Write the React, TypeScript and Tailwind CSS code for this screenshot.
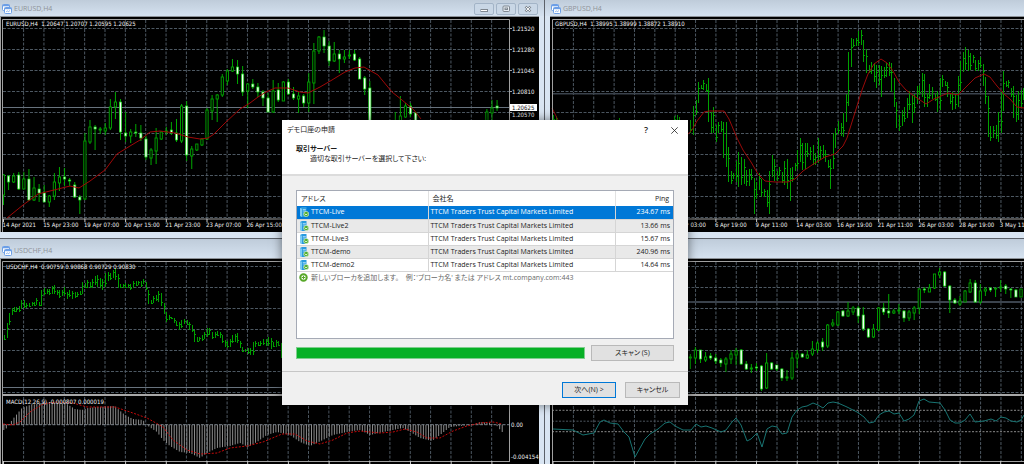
import type { ReactNode } from 'react'

// [high, body top, body bottom, low, filled]
type Candle = [number, number, number, number, number]
type Point = [number, number]

const eurusdMain: Candle[] = [
  [174, 175, 195, 205, 0], [175, 176, 182, 190, 1], [173, 176, 182, 183, 0], [172, 175, 189, 190, 1],
  [172, 179, 189, 189, 0], [169, 179, 200, 201, 1], [177, 188, 200, 201, 0], [184, 189, 193, 202, 1],
  [185, 193, 202, 202, 1], [195, 196, 202, 207, 0], [173, 182, 196, 200, 0], [167, 177, 183, 191, 0],
  [168, 177, 179, 186, 1], [178, 180, 181, 186, 1], [182, 185, 197, 198, 1], [195, 197, 200, 214, 1],
  [133, 141, 199, 200, 0], [120, 127, 142, 144, 0], [125, 127, 129, 150, 1], [127, 129, 130, 134, 0],
  [123, 128, 131, 135, 0], [99, 107, 128, 130, 0], [92, 102, 107, 119, 0], [99, 102, 132, 140, 1],
  [112, 133, 136, 142, 1], [129, 132, 136, 143, 0], [124, 132, 133, 137, 1], [125, 133, 138, 141, 1],
  [136, 139, 157, 160, 1], [148, 150, 158, 165, 0], [128, 138, 151, 164, 0], [131, 132, 139, 140, 0],
  [127, 131, 132, 135, 0], [122, 130, 133, 135, 1], [119, 133, 140, 142, 1], [104, 106, 141, 143, 0],
  [101, 106, 155, 161, 1], [146, 149, 156, 169, 0], [144, 144, 150, 151, 0], [138, 139, 145, 146, 0],
  [108, 110, 139, 140, 0], [95, 99, 111, 120, 0], [94, 95, 99, 122, 0], [74, 77, 95, 97, 0],
  [69, 71, 81, 85, 0], [59, 67, 71, 72, 0], [60, 67, 74, 84, 1], [66, 74, 92, 96, 1],
  [83, 84, 91, 108, 0], [79, 84, 87, 89, 1], [83, 87, 92, 97, 1], [90, 92, 98, 106, 1],
  [93, 98, 112, 112, 1], [80, 91, 112, 113, 0], [83, 90, 100, 102, 1], [81, 82, 101, 101, 0],
  [79, 82, 94, 95, 1], [87, 94, 98, 100, 1], [92, 96, 99, 113, 0], [94, 96, 103, 107, 1],
  [73, 82, 103, 112, 0], [43, 51, 83, 104, 0], [36, 37, 51, 54, 0], [30, 37, 46, 53, 1],
  [41, 46, 61, 66, 1], [42, 54, 61, 62, 0], [50, 54, 59, 73, 1], [50, 57, 59, 63, 0],
  [50, 55, 56, 59, 0], [50, 54, 60, 61, 1], [57, 59, 79, 79, 1], [76, 78, 89, 95, 1],
  [81, 88, 125, 128, 1],
]

const eurusdMid: Candle[] = [
  [112, 124, 130, 132, 0], [96, 116, 125, 128, 0], [103, 106, 117, 118, 0], [103, 106, 114, 117, 1], [112, 113, 125, 128, 1],
]

const eurusdLast: Candle[] = [
  [109, 112, 125, 128, 0], [100, 108, 113, 122, 0], [100, 106, 108, 111, 1],
]

const lowerRight: Candle[] = [
  [354, 357, 358, 369, 0], [347, 350, 358, 364, 0], [350, 350, 359, 363, 1], [352, 357, 360, 362, 0],
  [353, 356, 358, 360, 1], [354, 358, 361, 364, 1], [358, 360, 363, 367, 1], [357, 359, 364, 372, 0],
  [350, 354, 359, 364, 0], [348, 351, 355, 365, 0], [349, 350, 364, 365, 1], [361, 364, 369, 370, 1],
  [364, 368, 369, 373, 0], [363, 367, 368, 371, 1], [365, 366, 389, 391, 1], [353, 363, 388, 389, 0],
  [362, 363, 369, 370, 1], [365, 365, 369, 371, 1], [368, 369, 378, 381, 1], [370, 377, 378, 381, 0],
  [352, 358, 378, 380, 0], [350, 354, 358, 368, 0], [353, 354, 357, 358, 1], [350, 355, 358, 359, 0],
  [341, 349, 354, 356, 0], [341, 343, 350, 353, 0], [338, 342, 347, 351, 1], [324, 325, 346, 348, 0],
  [319, 323, 325, 327, 0], [311, 312, 325, 326, 0], [310, 311, 316, 317, 1], [302, 311, 316, 317, 0],
  [306, 308, 312, 315, 0], [306, 308, 316, 323, 1], [307, 315, 329, 331, 1], [328, 329, 337, 338, 1],
  [324, 329, 337, 338, 0], [307, 308, 330, 331, 0], [303, 308, 312, 315, 1], [294, 311, 313, 318, 1],
  [309, 311, 313, 314, 0], [304, 310, 311, 314, 0], [310, 311, 318, 322, 1], [310, 312, 318, 321, 0],
  [306, 308, 313, 320, 0], [288, 289, 308, 314, 0], [287, 289, 290, 293, 1], [284, 288, 292, 292, 0],
  [274, 274, 288, 289, 0], [268, 272, 275, 278, 0], [271, 272, 286, 287, 1], [285, 286, 300, 313, 1],
  [298, 300, 303, 304, 1], [296, 301, 304, 306, 0], [290, 291, 302, 302, 0], [279, 283, 292, 293, 0],
  [280, 283, 302, 303, 1], [284, 291, 302, 304, 0], [287, 289, 291, 296, 0], [287, 288, 290, 292, 1],
  [288, 288, 289, 297, 0], [280, 287, 288, 292, 0], [284, 286, 289, 294, 1], [288, 289, 290, 298, 1],
  [289, 290, 297, 297, 1], [289, 289, 297, 297, 0],
]

// x high low
const gbpusdBars = `553 115 121, 556 116 124, 619 118 126, 674 116 126, 677 115 126, 679 117 126,
690 120 133, 693 106 135, 696 100 115, 698 82 103, 701 85 89, 703 80 90, 706 84 92, 708 78 122, 711 112 133, 713 107 133,
716 125 142, 718 122 133, 721 121 132, 723 122 158, 726 122 167, 728 147 182, 731 171 184, 733 173 179, 736 161 182,
738 152 187, 741 157 185, 744 159 184, 746 170 186, 749 169 186, 751 169 180, 754 178 214, 756 182 199, 759 173 190,
761 179 197, 764 189 197, 767 190 207, 769 171 214, 772 155 177, 774 159 181, 777 171 181, 779 167 176, 782 172 183,
784 161 185, 787 159 189, 790 168 201, 792 167 182, 795 163 171, 797 150 169, 800 138 162, 802 143 170, 805 143 169,
807 143 157, 810 147 160, 813 145 165, 815 153 165, 818 138 163, 820 146 160, 823 145 158, 825 150 162, 828 160 168,
830 159 189, 833 133 169, 835 128 148, 838 121 134, 841 123 136, 843 113 137, 846 94 122, 848 52 106, 851 38 67,
853 39 47, 856 38 46, 858 31 46, 861 30 45, 863 40 62, 866 49 73, 869 65 73, 871 62 74, 874 63 82, 876 65 88,
879 65 85, 881 66 97, 884 67 78, 886 63 77, 889 62 76, 891 63 92, 894 78 107, 896 102 128, 899 115 131, 902 110 126,
904 107 122, 907 98 118, 909 91 110, 912 95 123, 914 94 113, 917 86 104, 919 85 95, 922 73 97, 924 74 107, 927 93 107,
929 84 99, 932 87 99, 935 93 101, 937 91 112, 940 78 110, 942 75 87, 945 81 86, 947 82 97, 950 93 104, 952 92 110,
955 93 109, 958 76 107, 960 61 91, 963 52 72, 965 47 70, 968 50 71, 970 53 70, 973 55 63, 975 60 71, 978 60 71,
980 57 68, 983 64 86, 985 77 104, 988 96 137, 990 126 141, 993 126 138, 996 125 139, 998 112 142, 1001 92 133,
1003 71 111, 1006 81 87, 1008 80 88, 1011 88 97, 1013 86 118, 1016 95 122, 1018 91 120, 1021 90 108, 1023 88 100`

const usdchfBars = `4 335 340, 7 323 338, 9 313 325, 12 308 315, 14 307 312, 16 307 312, 19 306 312, 21 300 309, 24 300 308,
26 303 308, 29 303 307, 32 302 306, 34 302 306, 36 298 305, 39 302 306, 41 290 306, 44 288 295, 47 289 294, 49 289 295,
52 286 294, 54 285 294, 57 290 295, 59 290 298, 62 290 296, 64 287 295, 67 292 299, 69 290 297, 72 291 299, 75 292 298,
77 292 297, 80 291 295, 82 282 294, 85 283 288, 87 280 288, 90 282 288, 92 279 288, 95 276 285, 97 275 287, 100 278 288,
102 279 290, 105 273 287, 108 272 281, 110 273 280, 113 270 278, 115 268 280, 118 274 288, 120 284 288, 123 284 288,
125 283 288, 128 284 288, 130 284 290, 133 281 288, 136 281 286, 138 281 285, 141 281 287, 143 279 284, 146 282 290,
148 290 304, 151 300 304, 153 296 303, 156 295 301, 158 291 302, 161 293 306, 164 303 314, 166 312 322, 169 315 320,
171 317 319, 174 318 323, 176 321 326, 179 322 330, 181 320 328, 184 319 324, 187 320 325, 189 322 330, 192 325 332,
194 330 342, 197 337 342, 199 337 341, 202 335 341, 204 332 339, 207 328 337, 209 328 335, 212 332 339, 215 332 338,
217 331 336, 220 332 338, 222 335 343, 225 340 347, 227 341 348, 230 339 347, 232 335 343, 235 334 342, 237 333 343,
240 341 348, 242 347 352, 245 349 352, 248 348 354, 250 348 355, 253 342 355, 255 341 347, 258 342 346, 260 341 346,
263 339 345, 266 339 346, 268 337 346, 271 338 349, 273 342 347, 276 340 347, 278 341 346, 281 343 358`

const eurusdAverage =
  '7,218 23,205 38,194 50,191 62,188 70,186 79,188 90,181 105,170 117,154 130,146 140,140 150,132 160,131 175,133 188,137 200,139 208,138 214,134 225,123 240,109 250,103 258,97 266,92 275,88 288,88 300,92 308,93 320,87 332,80 345,72 355,68 364,67 378,75 392,92 402,100 414,110 421,119'

const gbpusdAverage =
  '552,108 558,120 570,138 660,170 688,134 692,130 697,121 704,112 709,111 724,111 729,119 737,138 743,150 751,162 758,174 765,181 775,182 788,182 795,179 803,171 815,163 825,157 835,154 843,146 847,138 852,122 857,106 862,90 868,74 874,64 881,59 887,63 893,71 899,82 906,90 914,96 920,100 926,104 934,99 948,93 958,95 965,88 975,78 984,74 990,77 997,86 1004,94 1010,99 1017,107 1024,108'

const macdProfile: Point[] = [
  [4, 430], [7, 428], [9, 425], [12, 420], [17, 414], [22, 408], [30, 405], [50, 402], [67, 404], [75, 409],
  [82, 410], [88, 408], [97, 407], [115, 406], [118, 409], [125, 415], [133, 419], [143, 420], [148, 426],
  [157, 432], [163, 440], [170, 446], [180, 452], [190, 453], [200, 458], [207, 453], [217, 448], [230, 446],
  [240, 443], [248, 447], [257, 442], [267, 435], [277, 432], [290, 435], [300, 442], [310, 446], [323, 440],
  [333, 435], [347, 432], [360, 430], [370, 435], [383, 432], [403, 428], [412, 433], [420, 438], [432, 441],
  [440, 435], [450, 427], [460, 426], [472, 425], [480, 422], [490, 423], [497, 426], [502, 432],
]

const macdSignal =
  '3,424 13,425 20,422 30,412 43,404 57,402 73,403 87,407 115,407 130,412 147,418 163,427 173,440 187,450 200,454 217,453 230,448 247,446 263,442 282,434 295,434 307,441 320,444 333,440 347,433 360,431 380,433 393,432 405,429 417,432 427,438 440,438 453,431 467,426 480,423 493,422 502,424'

const oscillator =
  '553,429 573,430 583,435 594,433 600,422 604,420 610,423 618,424 624,432 629,437 635,457 645,439 650,434 658,429 665,423 670,422 675,426 683,430 691,430 696,424 701,427 706,426 712,428 721,432 726,430 732,422 736,418 741,425 747,441 751,439 757,433 762,447 767,429 772,426 777,427 782,434 787,433 792,417 797,410 802,407 807,406 813,403 818,405 823,408 828,403 833,402 838,403 847,407 857,412 864,417 869,423 874,422 879,415 884,412 889,411 894,414 899,413 904,421 909,419 914,415 919,401 924,399 929,402 940,403 945,410 950,420 955,423 960,423 965,420 970,414 975,422 984,421 991,419 996,421 1001,417 1006,418 1011,421 1017,422 1021,420 1024,415'

const servers = [
  { address: 'TTCM-Live', ping: '234.67 ms' },
  { address: 'TTCM-Live2', ping: '13.66 ms' },
  { address: 'TTCM-Live3', ping: '15.67 ms' },
  { address: 'TTCM-demo', ping: '240.96 ms' },
  { address: 'TTCM-demo2', ping: '14.64 ms' },
]

function macdAt(x: number) {
  const i = macdProfile.findIndex((p) => p[0] >= x)
  if (i <= 0) return macdProfile[i === 0 ? 0 : macdProfile.length - 1][1]
  const [x0, y0] = macdProfile[i - 1]
  const [x1, y1] = macdProfile[i]
  return y0 + ((y1 - y0) * (x - x0)) / (x1 - x0)
}

const steps = (start: number, step: number, count: number) =>
  Array.from({ length: count }, (_, i) => start + i * step)

function Candles({ data, start }: { data: Candle[]; start: number }) {
  return (
    <g>
      {data.map(([high, top, bottom, low, filled], i) => {
        const x = start + i * 5.088
        return (
          <g key={i}>
            <path d={`M${x} ${high}V${low}`} stroke="#00a800" />
            <rect
              x={x - 1.1}
              y={top}
              width={2.2}
              height={Math.max(bottom - top, 1)}
              fill={filled ? '#f4fff4' : '#000'}
              stroke={filled ? '#14d814' : '#00a800'}
              strokeWidth={filled ? 0.7 : 0.9}
            />
          </g>
        )
      })}
    </g>
  )
}

function Bars({ data }: { data: string }) {
  const bars = data.split(',').map((bar) => bar.trim().split(' ').map(Number))
  const lines = bars.map(([x, high, low]) => `M${x + 0.5} ${high}V${low}`).join('')
  const ticks = bars
    .map(([x, high, low], i) => `M${x + 1} ${Math.round(high + (low - high) * (i % 2 ? 0.3 : 0.7)) + 0.5}h1`)
    .join('')
  return (
    <g fill="none" stroke="#00a000">
      <path d={lines} />
      <path d={ticks} />
    </g>
  )
}

function Grid({ x, y, x0, x1, y0, y1 }: { x: number[]; y: number[]; x0: number; x1: number; y0: number; y1: number }) {
  return (
    <g stroke="#56626d" strokeWidth="0.9" strokeDasharray="3 1.5">
      {x.map((v) => (
        <path key={`x${v}`} d={`M${v} ${y0}V${y1}`} />
      ))}
      {y.map((v) => (
        <path key={`y${v}`} d={`M${x0} ${v}H${x1}`} />
      ))}
    </g>
  )
}

function TimeAxis({ start, labels }: { start: number; labels: string[] }) {
  return (
    <g>
      {labels.map((label, i) => {
        const x = start + i * 40.7
        return (
          <g key={label}>
            <path d={`M${x} 219V222`} stroke="#c8c8c8" />
            <text x={x - 1} y="227" fill="#f0f0f0" fontSize="6">
              {label}
            </text>
          </g>
        )
      })}
    </g>
  )
}

function Chart({ x, y, label, children }: { x: number; y: number; label: string; children: ReactNode }) {
  return (
    <svg
      role="img"
      aria-label={label}
      className="block h-full w-full font-['DejaVu_Sans_Condensed','DejaVu_Sans',sans-serif]"
    >
      <g transform={`translate(${-x} ${-y})`}>{children}</g>
    </svg>
  )
}

function ChartIcon() {
  return (
    <svg className="h-2.5 w-2.5 shrink-0" viewBox="0 0 10 10" aria-hidden="true">
      <rect x="0.5" y="0.5" width="7" height="6" rx="1" fill="#fff" stroke="#6c9fe6" />
      <path d="M0.5 1.5h7" stroke="#6c9fe6" strokeWidth="1.6" />
      <rect x="2.5" y="3.5" width="7" height="6" rx="1" fill="#fff" stroke="#6c9fe6" />
      <path d="M2.5 4.5h7" stroke="#6c9fe6" strokeWidth="1.4" />
      <path d="M4 8.2l1.2-1.4 1 .9L8 6.6" stroke="#6c9fe6" strokeWidth="0.7" fill="none" />
    </svg>
  )
}

function WindowButton({ label, children }: { label: string; children: ReactNode }) {
  return (
    <button
      type="button"
      aria-label={label}
      className="flex h-3 w-5 items-center justify-center rounded-xs border border-[#a3b4c7] bg-[#c9d7e6]"
    >
      <svg className="h-2 w-2.5" viewBox="0 0 10 8" fill="none" stroke="#7f8790" aria-hidden="true">
        {children}
      </svg>
    </button>
  )
}

function WindowButtons() {
  return (
    <div className="ml-auto flex gap-0.5 pr-1.5">
      <WindowButton label="Minimize">
        <rect x="2" y="4.5" width="6.5" height="2" fill="#fff" />
      </WindowButton>
      <WindowButton label="Restore">
        <rect x="2" y="1" width="6.5" height="5.5" rx="1" fill="#e8eef5" />
        <rect x="4" y="3" width="2.5" height="1.5" />
      </WindowButton>
      <WindowButton label="Close">
        <path d="M2.5 1.5l5 5M7.5 1.5l-5 5" strokeWidth="2.4" />
        <path d="M2.8 1.8l4.4 4.4M7.2 1.8l-4.4 4.4" stroke="#fff" strokeWidth="0.9" />
      </WindowButton>
    </div>
  )
}

type ChartWindowProps = {
  title?: string
  side: 'left' | 'right'
  row: 'top' | 'bottom'
  children: ReactNode
}

function ChartWindow({ title, side, row, children }: ChartWindowProps) {
  const left = side === 'left'
  const top = row === 'top'
  return (
    <section
      className={`flex min-w-0 flex-col overflow-hidden bg-[#d9e5f2] ${left ? '' : 'border-l border-[#5b6068]'} ${
        top ? 'border-b border-b-[#5b6068] pb-1.5' : ''
      }`}
    >
      <header
        className={`flex shrink-0 items-center gap-0.5 bg-linear-to-b from-[#bfccda] to-[#d5e2f0] ${
          top ? 'h-4 pt-0.5' : 'h-[19px] pt-1'
        } ${left ? 'pl-0.5' : 'pl-1.5'}`}
      >
        <ChartIcon />
        <h2 className="text-[7px] leading-3 text-[#8f9398]">{title}</h2>
        {left && top && <WindowButtons />}
      </header>
      <div className={`min-h-0 flex-1 border-t border-[#8d9298] bg-black ${left ? 'mr-[5px]' : 'ml-[5px]'}`}>
        {children}
      </div>
    </section>
  )
}

function ServerIcon() {
  return (
    <svg className="h-2.5 w-2.5 shrink-0" viewBox="0 0 10 10" aria-hidden="true">
      <path d="M1 1l2-1h4.5v8.5L6 10H3L1 9z" fill="#2a9be0" />
      <path d="M1 1l2 .8V10L1 9z" fill="#7cccf5" />
      <path d="M3.8 2.5h3M3.8 4h3" stroke="#bfe6fb" strokeWidth="0.7" />
      <circle cx="7.2" cy="7" r="2.6" fill="#4fae2c" stroke="#eaf6e4" strokeWidth="0.6" />
      <path d="M5.8 6.6l1.4 1.4 1.4-1.4" stroke="#fff" strokeWidth="0.9" fill="none" />
    </svg>
  )
}

function AddIcon() {
  return (
    <svg className="h-[9px] w-[9px] shrink-0" viewBox="0 0 10 10" aria-hidden="true">
      <circle cx="5" cy="5" r="3.6" fill="#fff" stroke="#58a829" strokeWidth="2.2" />
      <path d="M5 3v4M3 5h4" stroke="#58a829" strokeWidth="1.2" />
    </svg>
  )
}

function DemoAccountDialog() {
  return (
    <div
      role="dialog"
      aria-labelledby="dialog-title"
      className="absolute top-[120px] left-[282px] w-[406px] bg-[#f0f0f0] text-[7px] leading-3 text-[#1c1c1c] shadow-[0_0_10px_rgba(0,0,0,0.5)]"
    >
      <div className="flex items-center bg-white pt-0.5 pl-[5px]">
        <h1 id="dialog-title" className="h-4 leading-4">デモ口座の申請</h1>
        <button type="button" aria-label="Help" className="ml-auto w-7 text-center text-[9px] font-semibold">
          ?
        </button>
        <button type="button" aria-label="Close" className="flex w-7 justify-center">
          <svg className="h-[7px] w-[7px]" viewBox="0 0 7 7" stroke="#222" strokeWidth="0.8" aria-hidden="true">
            <path d="M0.3 0.3l6.4 6.4M6.7 0.3L0.3 6.7" />
          </svg>
        </button>
      </div>
      <div className="border-b-2 border-[#dcdcdc] bg-white px-3.5 pt-1.5 pb-2.5 leading-[10px]">
        <h2 className="font-bold">取引サーバー</h2>
        <p className="pl-3.5">適切な取引サーバーを選択して下さい:</p>
      </div>

      <div className="px-3.5 pt-3.5 pb-2.5">
        <div className="h-[149px] border border-[#a5aab5] bg-white">
          <table className="w-full table-fixed border-collapse">
            <thead>
              <tr className="h-[15px] text-left">
                <th scope="col" className="w-[131px] border-r border-[#e2e2e2] p-0 pl-1 font-normal">アドレス</th>
                <th scope="col" className="border-r border-[#e2e2e2] p-0 pl-1 font-normal">会社名</th>
                <th scope="col" className="w-[58px] p-0 pr-1 text-right font-normal">Ping</th>
              </tr>
            </thead>
            <tbody>
              {servers.map((server, i) => (
                <tr
                  key={server.address}
                  className={`h-[13px] border-b border-[#d5d5d5] ${
                    i === 0 ? 'bg-[#0078d7] text-white' : i % 2 ? 'bg-[#e9e9e9]' : ''
                  }`}
                >
                  <td className="border-r border-[#d5d5d5] p-0 pl-0.5">
                    <span className="flex h-3 items-center gap-0.5">
                      <ServerIcon />
                      {server.address}
                    </span>
                  </td>
                  <td className="border-r border-[#d5d5d5] p-0 pl-0.5 whitespace-nowrap">
                    TTCM Traders Trust Capital Markets Limited
                  </td>
                  <td className="p-0 pr-[3px] text-right whitespace-nowrap">{server.ping}</td>
                </tr>
              ))}
            </tbody>
          </table>
          <p className="flex items-center gap-[3px] pl-0.5 whitespace-pre text-[#6a6a6a]">
            <AddIcon />
            {"新しいブローカを追加します。　例：'ブローカ名' または アドレス mt.company.com:443"}
          </p>
        </div>
        <div className="mt-1.5 flex items-center gap-1.5">
          <div
            role="progressbar"
            aria-label="スキャン"
            aria-valuenow={100}
            className="h-3 flex-1 border border-[#7fce8d] bg-[#06b025]"
          />
          <button type="button" className="h-4 w-[83px] border border-[#b9b9b9] bg-[#e1e1e1] leading-3">
            スキャン (S)
          </button>
        </div>
      </div>

      <div className="flex justify-end gap-[9px] border-t border-[#c6c6c6] pt-2.5 pr-2 pb-[7px]">
        <button type="button" className="h-4 w-[54px] border border-[#0078d7] bg-[#e1e1e1] leading-3">
          次へ(N) &gt;
        </button>
        <button type="button" className="h-4 w-[55px] border border-[#b9b9b9] bg-[#e1e1e1] leading-3">
          キャンセル
        </button>
      </div>
    </div>
  )
}

function EurusdChart() {
  return (
    <Chart x={0} y={17} label="EURUSD,H4">
      <Grid x={steps(23.6, 20.35, 24)} y={steps(28.5, 21, 10)} x0={3} x1={509} y0={20} y1={219} />
      <path d="M3 107.5H509" stroke="#68737e" />
      <Candles data={eurusdMain} start={3.5} />
      <Candles data={eurusdMid} start={395.3} />
      <Candles data={eurusdLast} start={486.9} />
      <polyline points={eurusdAverage} fill="none" stroke="#a00808" />
      <path d="M0.5 17V232M2.5 232V19.5H509.5V219M3 219H510" stroke="#a0a0a0" fill="none" />
      <text x="6" y="26" fill="#f0f0f0" fontSize="6">{'EURUSD,H4\u00a0 1.20647 1.20707 1.20595 1.20625'}</text>
      <TimeAxis
        start={3.5}
        labels={['14 Apr 2021', '15 Apr 23:00', '19 Apr 07:00', '20 Apr 15:00', '21 Apr 23:00', '23 Apr 07:00', '26 Apr 15:00']}
      />
      {['1.21520', '1.21280', '1.21045', '1.20810'].map((price, i) => (
        <g key={price}>
          <path d={`M509 ${28.5 + i * 21}h3`} stroke="#a0a0a0" />
          <text x="512" y={31 + i * 21} fill="#f0f0f0" fontSize="6">{price}</text>
        </g>
      ))}
      <path d="M509 112.5h3" stroke="#a0a0a0" />
      <rect x="510" y="104" width="27" height="7" fill="#fff" />
      <text x="512" y="110" fill="#111" fontSize="6">1.20625</text>
      <text x="512" y="117" fill="#f0f0f0" fontSize="6">1.20570</text>
    </Chart>
  )
}

function GbpusdChart() {
  return (
    <Chart x={550} y={17} label="GBPUSD,H4">
      <Grid x={steps(573.4, 20.36, 24)} y={steps(28.5, 21, 10)} x0={552} x1={1200} y0={20} y1={219} />
      <path d="M552 93.7H1200" stroke="#3b434d" strokeWidth="1.6" />
      <Bars data={gbpusdBars} />
      <polyline points={gbpusdAverage} fill="none" stroke="#9a0a0a" />
      <path d="M552.5 232V19.5H1200M553 219H1200" stroke="#a0a0a0" fill="none" />
      <text x="555" y="26" fill="#f0f0f0" fontSize="6">{'GBPUSD,H4\u00a0 1.38995 1.38999 1.38872 1.38910'}</text>
      <TimeAxis
        start={675.2}
        labels={['5 Apr 03:00', '6 Apr 19:00', '9 Apr 11:00', '14 Apr 03:00', '16 Apr 19:00', '21 Apr 11:00', '26 Apr 03:00', '28 Apr 19:00', '3 May 11:00']}
      />
    </Chart>
  )
}

function UsdchfChart() {
  return (
    <Chart x={0} y={259} label="USDCHF,H4">
      <Grid x={steps(23.6, 20.35, 24)} y={steps(266.5, 21, 7)} x0={3} x1={509} y0={262} y1={461} />
      <path d="M3 387.5H509" stroke="#68737e" />
      <Bars data={usdchfBars} />
      <path d="M3 424.7H509" stroke="#77808a" strokeDasharray="3 1.5" />
      {steps(3.8, 2.543, 197).map((x) => (
        <path key={x} d={`M${x} 424.7V${macdAt(x)}`} stroke="#8c8c8c" />
      ))}
      <polyline points={macdSignal} fill="none" stroke="#c80a0a" strokeDasharray="2 1.5" />
      <path d="M0.5 259V480M2.5 480V261.5H509.5V461M3 461.5H510" stroke="#a0a0a0" fill="none" />
      <path d="M2 395H538" stroke="#a8a8a8" strokeWidth="2" />
      {steps(3.5, 40.7, 13).map((x) => (
        <path key={x} d={`M${x} 461V464`} stroke="#c8c8c8" />
      ))}
      <text x="6" y="269" fill="#f0f0f0" fontSize="6">{'USDCHF,H4\u00a0 0.90759 0.90868 0.90729 0.90830'}</text>
      <text x="6" y="404" fill="#f0f0f0" fontSize="6">MACD(12,26,9) -0.000807 0.000019</text>
      <text x="511" y="427" fill="#f0f0f0" fontSize="6">0.00</text>
      <text x="511" y="459" fill="#f0f0f0" fontSize="6">-0.004154</text>
    </Chart>
  )
}

function LowerRightChart() {
  return (
    <Chart x={550} y={259} label="H4">
      <Grid x={steps(573.4, 20.36, 24)} y={steps(266.5, 21, 7)} x0={552} x1={1200} y0={262} y1={461} />
      <path d="M552 302H1200" stroke="#3b434d" strokeWidth="1.8" />
      <Candles data={lowerRight} start={690.3} />
      <g strokeDasharray="2 1.5">
        <path d="M552 410.3H1200M552 431.7H1200" stroke="#8a8a8a" />
        <path d="M552 421.2H1200" stroke="#4c555e" />
      </g>
      <polyline points={oscillator} fill="none" stroke="#187472" />
      <path d="M552.5 480V261.5H1200M553 461.5H1200" stroke="#a0a0a0" fill="none" />
      <path d="M552 395H1200" stroke="#a8a8a8" strokeWidth="2" />
      {steps(553, 40.7, 15).map((x) => (
        <path key={x} d={`M${x} 461V464`} stroke="#c8c8c8" />
      ))}
    </Chart>
  )
}

export default function App() {
  return (
    <main className="relative flex h-screen flex-col overflow-hidden bg-[#d9e5f2] font-['Open_Sans','Noto_Sans_CJK_JP',sans-serif] [font-feature-settings:'palt']">
      <div className="grid h-[239px] shrink-0 grid-cols-[17fr_15fr]">
        <ChartWindow title="EURUSD,H4" side="left" row="top">
          <EurusdChart />
        </ChartWindow>
        <ChartWindow title="GBPUSD,H4" side="right" row="top">
          <GbpusdChart />
        </ChartWindow>
      </div>
      <div className="grid min-h-0 flex-1 grid-cols-[17fr_15fr]">
        <ChartWindow title="USDCHF,H4" side="left" row="bottom">
          <UsdchfChart />
        </ChartWindow>
        <ChartWindow side="right" row="bottom">
          <LowerRightChart />
        </ChartWindow>
      </div>
      <DemoAccountDialog />
    </main>
  )
}
